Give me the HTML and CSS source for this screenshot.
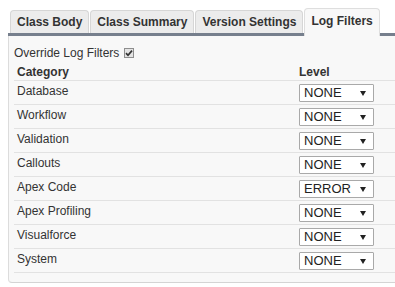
FILE: index.html
```html
<!DOCTYPE html>
<html lang="en">
<head>
    <meta charset="UTF-8">
    <meta name="viewport" content="width=device-width, initial-scale=1.0">
    <title>Log Filters</title>
    <link rel="stylesheet" href="styles.css">
</head>
<body>
    <div class="tabs">
        <div class="tab">Class Body</div>
        <div class="tab">Class Summary</div>
        <div class="tab">Version Settings</div>
        <div class="tab active">Log Filters</div>
    </div>

    <div class="panel">
        <div class="override">
            Override Log Filters
            <span class="check">
                <svg width="10" height="10" viewBox="0 0 10 10">
                    <rect x="0.5" y="0.5" width="9" height="9" fill="#e4e4e4" stroke="#8e8e8e"/>
                    <path d="M2 5.2 L4 7.3 L8 2.6" fill="none" stroke="#333" stroke-width="1.7"/>
                </svg>
            </span>
        </div>

        <table>
            <thead>
                <tr>
                    <th class="col-cat">Category</th>
                    <th>Level</th>
                </tr>
            </thead>
            <tbody>
                <tr><td>Database</td><td><div class="select">NONE</div></td></tr>
                <tr><td>Workflow</td><td><div class="select">NONE</div></td></tr>
                <tr><td>Validation</td><td><div class="select">NONE</div></td></tr>
                <tr><td>Callouts</td><td><div class="select">NONE</div></td></tr>
                <tr><td>Apex Code</td><td><div class="select">ERROR</div></td></tr>
                <tr><td>Apex Profiling</td><td><div class="select">NONE</div></td></tr>
                <tr><td>Visualforce</td><td><div class="select">NONE</div></td></tr>
                <tr><td>System</td><td><div class="select">NONE</div></td></tr>
            </tbody>
        </table>
    </div>
</body>
</html>
```

FILE: styles.css
```css
* {
    margin: 0;
    padding: 0;
    box-sizing: border-box;
}

body {
    font-family: 'Liberation Sans', Arial, sans-serif;
    font-size: 12px;
    color: #333;
    background: white;
    width: 395px;
    overflow: hidden;
}

.tabs {
    display: flex;
    align-items: flex-end;
    margin-left: 8px;
    padding: 8px 0 0 2px;
    border-bottom: 3px solid #767f8d;
}

.tab {
    height: 23px;
    line-height: 22px;
    padding: 0 6px;
    margin-right: 1px;
    font-weight: bold;
    background: #ececec;
    border: 1px solid #d6d6d6;
    border-bottom: none;
    border-radius: 4px 4px 0 0;
}

.tab.active {
    height: 28px;
    line-height: 25px;
    margin-bottom: -3px;
    background: #f8f8f8;
    border-color: #dedede;
}

.panel {
    margin-left: 8px;
    padding: 10px 0 9px 5px;
    background: #f8f8f8;
    border-left: 1px solid #dcdcdc;
    border-bottom: 1px solid #d4d4d4;
    border-radius: 0 0 0 4px;
}

.override {
    line-height: 14px;
    height: 15px;
}

.check svg {
    display: inline-block;
    vertical-align: -1px;
    margin-left: 1px;
}

table {
    width: 100%;
    border-collapse: collapse;
    table-layout: fixed;
}

th, td {
    text-align: left;
    padding: 3px 3px 0;
    line-height: 14px;
    vertical-align: top;
    border-bottom: 1px solid #e2e2e2;
}

th {
    padding-top: 4px;
    height: 19px;
    font-weight: bold;
}

td {
    height: 24px;
}

.col-cat {
    width: 282px;
}

.select {
    position: relative;
    width: 75px;
    height: 18px;
    padding-left: 4px;
    line-height: 16px;
    font-size: 13px;
    color: #222;
    background: white;
    border: 1px solid #a9a9a9;
    border-radius: 1px;
}

.select::after {
    content: '';
    position: absolute;
    right: 7px;
    top: 6px;
    border-left: 3px solid transparent;
    border-right: 3px solid transparent;
    border-top: 5px solid #222;
}
```
